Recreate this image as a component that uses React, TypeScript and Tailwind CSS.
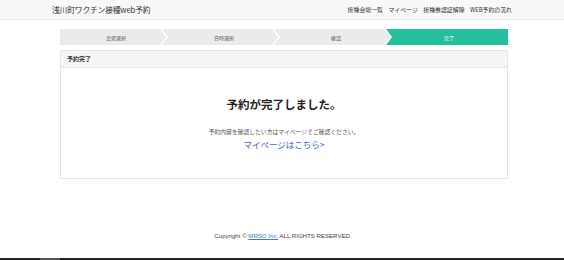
import React from "react";

const steps = [
  { label: "会場選択", active: false },
  { label: "日時選択", active: false },
  { label: "確認", active: false },
  { label: "完了", active: true },
];

const navItems = ["接種会場一覧", "マイページ", "接種券認証解除", "WEB予約の流れ"];

const jp = "font-['Noto_Sans_CJK_JP','Noto_Sans',sans-serif]";

export default function App() {
  return (
    <div className={`h-[260px] w-[564px] bg-white flex flex-col overflow-hidden ${jp}`}>
      {/* Header */}
      <header className="h-[20px] shrink-0 bg-[#f8f8f8] border-b border-[#ececec] flex items-center justify-between pl-[52px] pr-[52px]">
        <span className="text-[7.8px] leading-none text-[#333] tracking-[-0.2px]">浅川町ワクチン接種web予約</span>
        <nav className="flex items-center gap-[5.5px] text-[5.9px] leading-none text-[#333]">
          {navItems.map((n) => (
            <span key={n}>{n}</span>
          ))}
        </nav>
      </header>

      <main className="ml-[60px] w-[448px] flex flex-col">
        {/* Steps */}
        <div className="mt-[9px] h-[16px] flex">
          {steps.map((s, i) => (
            <div
              key={s.label}
              className={`flex items-center justify-center text-[5px] leading-none ${
                s.active ? "bg-[#26bf9e] text-white" : "bg-[#ebebeb] text-[#555]"
              } ${
                i === 0
                  ? "w-[106px] pl-[6px] [clip-path:polygon(0_0,calc(100%-6px)_0,100%_50%,calc(100%-6px)_100%,0_100%)]"
                  : i === steps.length - 1
                  ? "flex-1 -ml-[4px] pl-[4px] [clip-path:polygon(0_0,100%_0,100%_100%,0_100%,6px_50%)]"
                  : "w-[116px] -ml-[4px] pl-[8px] [clip-path:polygon(0_0,calc(100%-6px)_0,100%_50%,calc(100%-6px)_100%,0_100%,6px_50%)]"
              }`}
            >
              {s.label}
            </div>
          ))}
        </div>

        {/* Card */}
        <section className="mt-[5px] h-[129px] border border-[#e6e6e6] rounded-[2px] flex flex-col">
          <div className="h-[17px] shrink-0 bg-[#f5f5f5] border-b border-[#e6e6e6] flex items-center pl-[6px]">
            <span className="text-[6px] leading-none font-bold text-[#333]">予約完了</span>
          </div>
          <div className="flex flex-col items-center">
            <h1 className="mt-[31px] text-[11.5px] leading-none font-bold text-[#222]">予約が完了しました。</h1>
            <p className="mt-[18px] text-[5.8px] leading-none text-[#555]">
              予約内容を確認したい方はマイページでご確認ください。
            </p>
            <a href="#" className="mt-[6px] text-[8.5px] leading-none text-[#4660d0]">
              マイページはこちら&gt;
            </a>
          </div>
        </section>
      </main>

      {/* Footer */}
      <footer className="mt-auto mb-[19px] flex justify-center">
        <span className="ml-[2px] text-[6.1px] leading-none text-[#444] font-['Liberation_Sans','DejaVu_Sans',sans-serif]">
          Copyright © <a href="#" className="text-[#4f78b8] underline">MRSO Inc.</a> ALL RIGHTS RESERVED.
        </span>
      </footer>

      <div className="h-[2px] shrink-0 bg-[#222] flex">
        <div className="ml-[40px] w-[20px] bg-[#555]" />
      </div>
    </div>
  );
}
